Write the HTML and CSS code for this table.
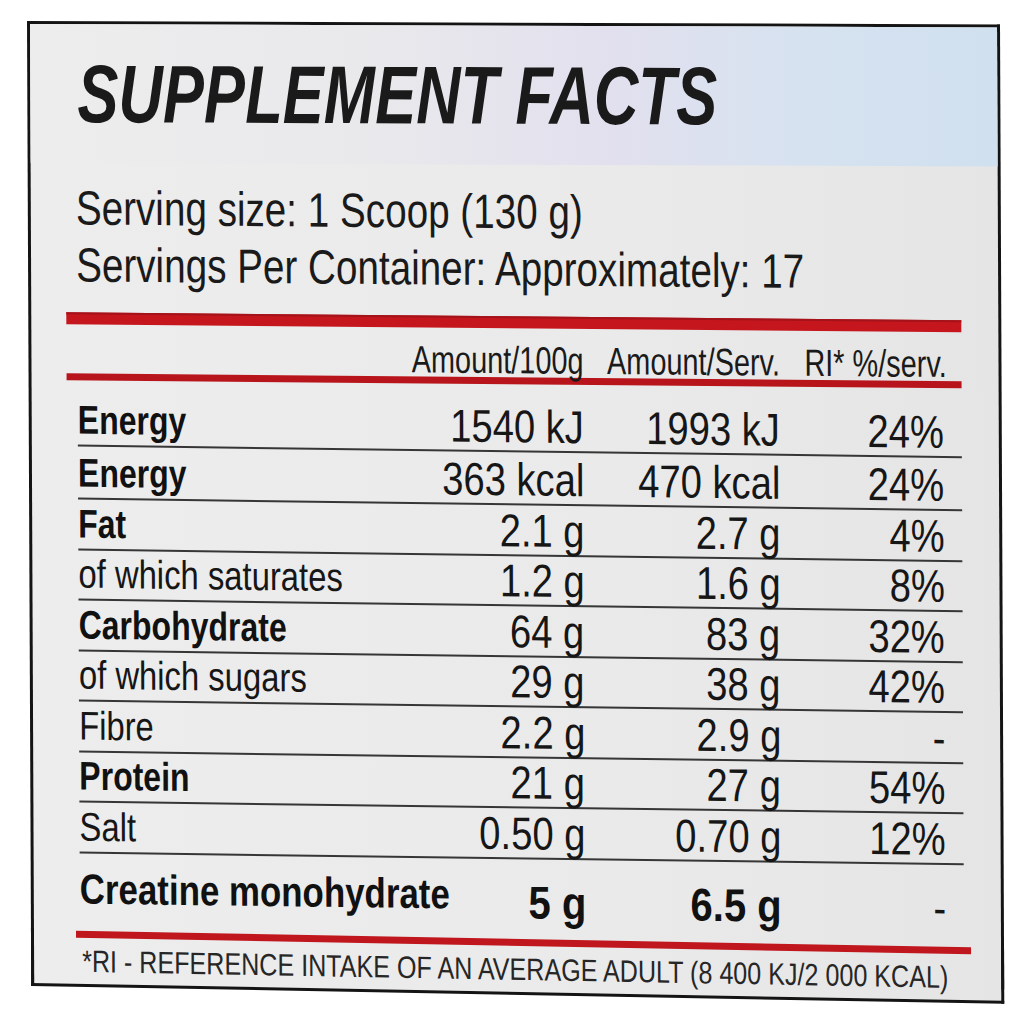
FILE: index.html
```html
<!DOCTYPE html>
<html lang="en">
<head>
<meta charset="utf-8">
<title>Supplement Facts</title>
<link rel="stylesheet" href="styles.css">
</head>
<body>
<div class="card">
  <header class="head">
    <h1 class="title">SUPPLEMENT FACTS</h1>
  </header>
  <section class="serving">
    <p class="srv">Serving size: 1 Scoop (130 g)</p>
    <p class="srv">Servings Per Container: Approximately: 17</p>
    <div class="rule-thick"></div>
    <div class="colhead">
      <span></span>
      <span class="ch">Amount/100g</span>
      <span class="ch">Amount/Serv.</span>
      <span class="ch ch-last">RI* %/serv.</span>
    </div>
    <div class="rule-thin"></div>
  </section>
  <section class="table">
    <div class="row row-first"><span class="lab b">Energy</span><span class="num">1540 kJ</span><span class="num">1993 kJ</span><span class="num">24%</span></div>
    <div class="row row-second"><span class="lab b">Energy</span><span class="num">363 kcal</span><span class="num">470 kcal</span><span class="num">24%</span></div>
    <div class="row"><span class="lab b">Fat</span><span class="num">2.1 g</span><span class="num">2.7 g</span><span class="num">4%</span></div>
    <div class="row"><span class="lab">of which saturates</span><span class="num">1.2 g</span><span class="num">1.6 g</span><span class="num">8%</span></div>
    <div class="row"><span class="lab b">Carbohydrate</span><span class="num">64 g</span><span class="num">83 g</span><span class="num">32%</span></div>
    <div class="row"><span class="lab">of which sugars</span><span class="num">29 g</span><span class="num">38 g</span><span class="num">42%</span></div>
    <div class="row"><span class="lab">Fibre</span><span class="num">2.2 g</span><span class="num">2.9 g</span><span class="num">-</span></div>
    <div class="row"><span class="lab b">Protein</span><span class="num">21 g</span><span class="num">27 g</span><span class="num">54%</span></div>
    <div class="row"><span class="lab">Salt</span><span class="num">0.50 g</span><span class="num">0.70 g</span><span class="num">12%</span></div>
    <div class="row row-creatine"><span class="lab b">Creatine monohydrate</span><span class="num b">5 g</span><span class="num b">6.5 g</span><span class="num">-</span></div>
  </section>
  <footer class="foot">
    <div class="rule-foot"></div>
    <p class="note">*RI - REFERENCE INTAKE OF AN AVERAGE ADULT (8 400 KJ/2 000 KCAL)</p>
  </footer>
</div>
</body>
</html>
```
FILE: styles.css
```css
* { box-sizing: border-box; }
html, body { margin: 0; padding: 0; background: #ffffff; }
body {
  font-family: "Liberation Sans", Arial, sans-serif;
  color: #161616;
  width: 1024px;
  height: 1024px;
  overflow: hidden;
}
.card {
  margin: 21px 0 0 27px;
  width: 973px;
  border: 3px solid #141414;
  border-bottom: none;
  background: linear-gradient(90deg, #ededed 0%, #eaeaea 60%, #e5e5e5 100%);
  transform-origin: 0 0;
  transform: skew(0.25deg, 0.2deg);
}
.head {
  height: 139px;
  padding: 30px 0 0 47px;
  background: linear-gradient(90deg, #ededed 0%, #e9e9ec 35%, #e2e0ee 60%, #d6e2f0 80%, #d0e0ef 100%);
}
.title {
  margin: 0;
  font-size: 82px;
  line-height: 80px;
  font-weight: bold;
  font-style: italic;
  color: #1a1a1a;
  white-space: nowrap;
  transform-origin: 0 50%;
  transform: scaleX(0.751);
}
.serving {
  transform-origin: 0 0;
  transform: skewY(0.3deg);
  padding-top: 16px;
}
.srv {
  margin: 0 0 0 45px;
  font-size: 48px;
  line-height: 57px;
  color: #1a1a1a;
  white-space: nowrap;
  transform-origin: 0 50%;
  transform: scaleX(0.805);
}
.rule-thick {
  margin: 19px 37px 0 35px;
  height: 12px;
  background: #c5161d;
  border-top: 2px solid #a4121a;
}
.colhead, .row {
  display: grid;
  grid-template-columns: 302px 204px 196px 164px;
  margin-left: 46px;
  width: 884px;
  padding-right: 18px;
}
.colhead {
  height: 49px;
  padding-top: 13px;
  font-size: 38px;
  line-height: 38px;
  color: #1a1a1a;
}
.ch {
  justify-self: end;
  white-space: nowrap;
  transform-origin: 100% 50%;
  transform: scaleX(0.76);
}
.ch-last { margin-right: -3px; }
.rule-thin {
  margin: 0 37px 0 35px;
  height: 7px;
  background: #b8141b;
}
.table {
  transform-origin: 0 0;
  transform: skewY(0.55deg);
}
.row {
  height: 50.5px;
  align-items: end;
  border-bottom: 2px solid #363636;
}
.row-first { height: 66px; }
.row-second { height: 53px; }
.row-creatine {
  height: 75px;
  border-bottom: none;
}
.lab {
  font-size: 40px;
  line-height: 40px;
  padding-bottom: 5px;
  white-space: nowrap;
  transform-origin: 0 50%;
  transform: scaleX(0.82);
}
.lab.b { transform: scaleX(0.8); }
.num {
  justify-self: end;
  font-size: 46px;
  line-height: 46px;
  padding-bottom: 1px;
  white-space: nowrap;
  transform-origin: 100% 50%;
  transform: scaleX(0.83);
}
.b { font-weight: bold; color: #111111; }
.row-creatine .lab {
  font-size: 42px;
  line-height: 42px;
  padding-bottom: 18px;
  transform: scaleX(0.83);
}
.row-creatine .num { padding-bottom: 9px; }
.row-creatine .num.b { transform: scaleX(0.87); }
.foot {
  margin: 0 -3px;
  border: 3px solid #141414;
  border-top: none;
  background: linear-gradient(90deg, #ededed 0%, #eaeaea 60%, #e5e5e5 100%);
  transform-origin: 0 0;
  transform: skewY(0.85deg);
  padding: 2px 0 7px 0;
}
.rule-foot {
  margin: 0 30px 0 42px;
  height: 7px;
  background: #c0161d;
}
.note {
  margin: 8px 0 0 48px;
  font-size: 31px;
  line-height: 31px;
  color: #262626;
  white-space: nowrap;
  transform-origin: 0 50%;
  transform: scaleX(0.81);
}
```
